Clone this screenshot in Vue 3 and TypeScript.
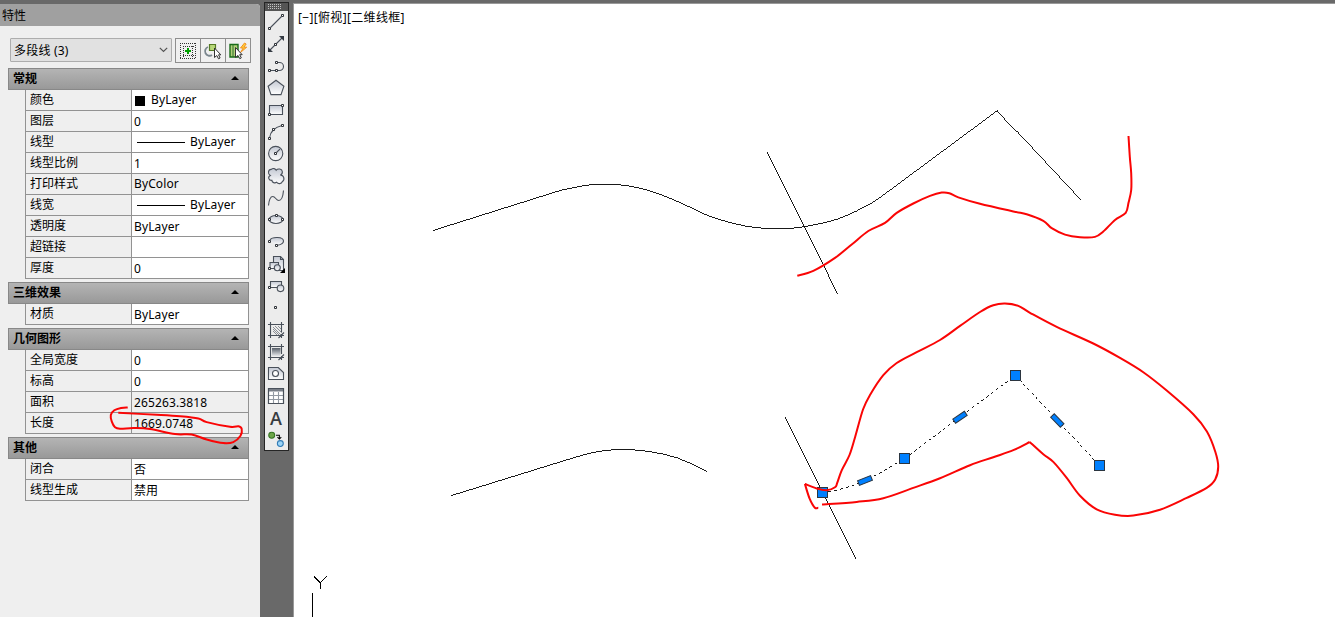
<script setup lang="ts">
interface Row { label: string; value: string; kind?: 'swatch' | 'line'; readonly?: boolean; shift?: 'up' }
interface Section { title: string; rows: Row[] }
type Pt = [number, number]

const sections: Section[] = [
  { title: '常规', rows: [
    { label: '颜色', value: 'ByLayer', kind: 'swatch' },
    { label: '图层', value: '0' },
    { label: '线型', value: 'ByLayer', kind: 'line' },
    { label: '线型比例', value: '1' },
    { label: '打印样式', value: 'ByColor', readonly: true, shift: 'up' },
    { label: '线宽', value: 'ByLayer', kind: 'line' },
    { label: '透明度', value: 'ByLayer' },
    { label: '超链接', value: '' },
    { label: '厚度', value: '0' },
  ] },
  { title: '三维效果', rows: [{ label: '材质', value: 'ByLayer' }] },
  { title: '几何图形', rows: [
    { label: '全局宽度', value: '0' },
    { label: '标高', value: '0' },
    { label: '面积', value: '265263.3818', readonly: true },
    { label: '长度', value: '1669.0748', readonly: true },
  ] },
  { title: '其他', rows: [
    { label: '闭合', value: '否' },
    { label: '线型生成', value: '禁用' },
  ] },
]

/* Smooth curve through a list of points (Catmull-Rom converted to cubic Béziers). */
function smooth(p: Pt[]): string {
  let d = `M${p[0][0]} ${p[0][1]}`
  for (let i = 0; i < p.length - 1; i++) {
    const a = p[i - 1] ?? p[i]
    const b = p[i]
    const c = p[i + 1]
    const e = p[i + 2] ?? c
    const n = (v: number) => v.toFixed(2)
    d += `C${n(b[0] + (c[0] - a[0]) / 6)} ${n(b[1] + (c[1] - a[1]) / 6)} ${n(c[0] - (e[0] - b[0]) / 6)} ${n(c[1] - (e[1] - b[1]) / 6)} ${c[0]} ${c[1]}`
  }
  return d
}

const upperCurve = smooth([[561.7, 190], [586.7, 185.3], [603, 184.3], [620, 184.9], [636.7, 187.5], [653, 191.9], [673, 199.5], [696.7, 210.3], [713, 217.5], [740, 224.9], [760, 227.9], [780, 228.6], [803, 226.9], [838, 218.9], [868, 204.9], [879, 198.3]])
const lowerCurve = smooth([[577, 456.7], [590, 453.3], [605, 450.6], [622, 449.5], [642, 450.6], [664, 454.3], [685, 461], [707, 471.3]])
const selectedCurve = smooth([[822.5, 492.5], [840, 489.3], [858, 483.5], [880, 473], [904.5, 458.5]])

const strokes: string[] = [
  smooth([[797.3, 275.7], [813.3, 270.9], [835, 257.9], [851.7, 244.5], [868.3, 231], [885, 222.9], [896.7, 212.9], [913.3, 203.5], [930, 195.9], [941.7, 192.6], [949.3, 193.2], [958.3, 197.4], [980, 203.8], [1013.3, 211.4], [1026.7, 214.2], [1043.3, 220.8], [1051.7, 228.2], [1065, 234.6], [1080, 237.2], [1095, 236.9], [1103.3, 231.5], [1115, 219.9], [1125.7, 212.8], [1128.5, 202.7], [1131.2, 190], [1131.2, 173.3], [1129.8, 156.7], [1128.5, 136]]),
  smooth([[818.3, 507.7], [814.9, 507.7], [809.5, 498.3], [804.9, 483.9]]),
  smooth([[804.9, 484], [816.7, 488.5], [826.7, 490.2], [835, 487.3], [837.3, 482.7], [841.7, 470.3], [849.5, 455], [855.2, 436.7], [863, 409.5], [870, 395], [883.3, 375.2], [896.7, 363], [916.7, 352.2], [940, 340], [960, 325.9], [980, 312], [993.3, 305.3], [1005, 303.6], [1018.3, 305.9], [1030, 312.8], [1056.7, 326.9], [1093.3, 343.5], [1120, 357.9], [1143.3, 372.2], [1166.7, 390.5], [1193.3, 414.2], [1206.9, 431.5], [1215.3, 451.7], [1218.2, 466.7], [1215.2, 479.5], [1206.7, 487.9], [1186.7, 497.9], [1160, 509.7], [1133.3, 515.6], [1115, 514.7], [1096.7, 509.3], [1080, 495.7], [1066.7, 477.9], [1053.3, 461.9], [1043.3, 454.2], [1029.7, 441.9]]),
  smooth([[1029.7, 442], [1013.3, 450.2], [993.3, 457.2], [970, 465.2], [940, 478.3], [913.3, 487.9], [883.3, 498.2], [856.7, 501.9], [822, 504.6]]),
  smooth([[127.7, 407.5], [121, 407.9], [114.3, 410.3], [110.8, 415], [111.8, 421.7], [115, 427.2], [120, 428.7], [134, 428.1], [150, 429], [175, 434.1], [191.7, 434.6], [206.7, 439.5], [223.3, 443.1], [233.3, 442.1], [240.5, 435.8], [241.7, 428.9], [238.5, 426.3], [230, 426.8], [206.7, 422.1], [198.3, 418.5], [180, 416.3], [156.7, 414.8], [118.3, 412.8]]),
]

const grips: Pt[] = [[822.5, 492.5], [904.5, 458.5], [1015.5, 375.5], [1099.5, 465.5]]
const midGrips = [
  { x: 865, y: 480.5, a: -22 },
  { x: 960, y: 417.3, a: -34 },
  { x: 1057.3, y: 420.5, a: 46 },
]
</script>

<template>
  <div class="app">
    <aside class="palette">
      <header class="palette-title">特性</header>
      <div class="picker">
        <div class="select">
          <span>多段线 (3)</span>
          <svg width="9" height="6" viewBox="0 0 9 6"><path d="M.8 .8 4.5 4.5 8.2 .8" fill="none" stroke="#555" stroke-width="1.2" /></svg>
        </div>
        <div class="tools">
          <span class="tool">
            <svg width="24" height="24" viewBox="0 0 24 24" shape-rendering="crispEdges">
              <path d="M4 4.5h16M4 19.5h16M4.5 4v16M19.5 4v16M7 7.5h11M7 16.5h11M7.5 7v11M16.5 7v11" fill="none" stroke="#333" stroke-dasharray="1 1" />
              <path d="M12 9v6M9 12h6" stroke="#00a000" stroke-width="2" />
            </svg>
          </span>
          <span class="tool">
            <svg width="24" height="24" viewBox="0 0 24 24">
              <path d="M11 16A4.5 4.5 0 1 1 7 8" fill="none" stroke="#7b878e" stroke-width="1.8" />
              <path d="M8.5 5.5h6v6h-6z" fill="#b8d878" stroke="#557a25" stroke-width="1.2" />
              <path d="M13.5 9v9.5l2.3-2 1.7 3.3 1.6-.8-1.6-3.2h2.3z" fill="#fff" stroke="#333" />
            </svg>
          </span>
          <span class="tool">
            <svg width="24" height="24" viewBox="0 0 24 24">
              <path d="M4 5.5h8V18H4z" fill="#b3cf7a" stroke="#176b17" stroke-width="1.4" />
              <path d="M7 5.5V18" stroke="#287528" />
              <path d="m18.5 4-4 5h2.7l-2.7 4.5 6.2-5.3h-2.8L20.200 5z" fill="#ffcf3b" stroke="#f08a18" stroke-width=".9" />
              <path d="M9.5 8.500v10l2.500-2 1.800 3.200 1.500-.8-1.600-3.200h2.500z" fill="#fff" stroke="#333" />
            </svg>
          </span>
        </div>
      </div>

      <div class="sections">
        <section v-for="s in sections" :key="s.title" class="section">
          <h2 class="section-head">
            <span>{{ s.title }}</span>
            <svg width="8" height="4" viewBox="0 0 8 4"><path d="M0 4 4 0l4 4z" fill="#000" /></svg>
          </h2>
          <dl class="rows">
            <div v-for="r in s.rows" :key="r.label" class="row">
              <dt>{{ r.label }}</dt>
              <dd :class="[r.kind, r.shift, { readonly: r.readonly }]">
                <i v-if="r.kind" class="mark"></i>
                <span>{{ r.value }}</span>
              </dd>
            </div>
          </dl>
        </section>
      </div>
    </aside>

    <div class="dock">
      <nav class="toolbar">
        <div class="grip">
          <svg width="15" height="5" viewBox="0 0 15 5" shape-rendering="crispEdges"><path d="M0 .5h14M0 2.5h14M0 4.5h14" stroke="#c4c4c4" stroke-dasharray="1 1" /></svg>
        </div>
        <svg class="ico" viewBox="0 0 23 22"><path d="m5.5 16.5 11-11" /><path class="n" d="M3.5 16.5h2v2h-2zM16.5 3.5h2v2h-2z" /></svg>
        <svg class="ico" viewBox="0 0 23 22"><path d="M5 17 17 5" /><path class="solid" d="M3 14v5h5zM14 3h5v5z" /><path class="n" d="M9.5 10.5h2v2h-2z" /></svg>
        <svg class="ico" viewBox="0 0 23 22"><path d="M12.5 7.5h2a4 4 0 0 1 0 8h-9" /><path class="n" d="M10.5 6.5h2v2h-2zM3.5 14.5h2v2h-2zM10.5 14.5h2v2h-2z" /></svg>
        <svg class="ico" viewBox="0 0 23 22"><defs><linearGradient id="metal" x2="0" y2="1"><stop offset="0" stop-color="#c3c8d3" /><stop offset="1" stop-color="#fff" /></linearGradient></defs><path class="m" d="m11 3.300 7.900 5.900-2.900 8.400H6L3.100 9.200z" /></svg>
        <svg class="ico" viewBox="0 0 23 22"><path class="m" d="M4.5 6.5h13v9h-13z" /><path class="n" d="M3.5 14.5h2v2h-2zM16.5 5.5h2v2h-2z" /></svg>
        <svg class="ico" viewBox="0 0 23 22"><path d="M4.5 17Q5.5 7.5 17 4.5" /><path class="n" d="M3.5 16.5h2v2h-2zM7.5 7.5h2v2h-2zM16.5 3.5h2v2h-2z" /></svg>
        <svg class="ico" viewBox="0 0 23 22"><circle class="m" cx="10.7" cy="10.5" r="7.1" /><path d="m11.5 9.5 3.4-3.4" /><path class="n" d="M9.5 9.5h2v2h-2z" /></svg>
        <svg class="ico" viewBox="0 0 23 22"><path class="m" d="M5.3 10.500C2.500 9 3 4.300 6.300 4.400c1.600-1.500 4.200-.8 4.900.8 1.700-2.200 5.900-1.300 6.100 1.300.3 1.700-.7 3-1.900 3.600 3.600-.1 4.700 4.700 2 6.400-1 2.600-4.300 2.800-5.700.8-1.900 1.300-4.700.2-4.800-1.900-3.300.2-4.400-3.500-1.600-4.900z" /></svg>
        <svg class="ico" viewBox="0 0 23 22"><path d="M3.5 18.5C4 13 5 9.5 7.8 9.5c2.7 0 3.2 4 6 4 2.6 0 4.2-4 4.7-10" /></svg>
        <svg class="ico" viewBox="0 0 23 22"><ellipse class="m" cx="11" cy="10.5" rx="7" ry="4" /><path class="n" d="M3.5 9.5h2v2h-2zM16.5 9.5h2v2h-2zM10.5 5.5h2v2h-2z" /></svg>
        <svg class="ico" viewBox="0 0 23 22"><path class="m nb" d="M5 9.5C6 5.5 18.5 5.5 18.5 10c0 2.8-3 4-7 4.3z" /><path d="M5 9C7 5.5 18.5 5.5 18.5 10c0 2.5-2.5 3.7-6 4.3" /><path class="n" d="M3.5 9.5h2v2h-2zM10.5 13.5h2v2h-2z" /></svg>
        <svg class="ico" viewBox="0 0 23 22"><path class="m" d="M8.5 9V3.5h7l3 3v11h-5" /><path d="M15.5 3.5v3h3" /><path class="m" d="M5 9.5h8.5v6H5z" /><circle class="m" cx="12.3" cy="14.8" r="3" /><path class="n" d="M3.5 14.5h2v2h-2z" /><path d="M20 15v5h-5z" fill="#000" stroke="none" /></svg>
        <svg class="ico" viewBox="0 0 23 22"><path class="m" d="M5.5 6.5h11v6h-11z" /><circle class="m" cx="15.5" cy="13.3" r="3.3" /><path class="n" d="M3.5 11.5h2v2h-2z" /></svg>
        <svg class="ico" viewBox="0 0 23 22"><path class="n" d="M9.5 9.5h2v2h-2z" /></svg>
        <svg class="ico" viewBox="0 0 23 22"><path d="m8 12 4 4M8 8l8 8M10 7l7 7M13 7l4 4M8 10l6 6" stroke-width=".6" /><path d="M3 5.5h16M3 16.5h12.5M5.5 3v16M16.5 3v10M13.5 19l5.5-5.5M16.5 15v4M16 16.5h3" /></svg>
        <svg class="ico" viewBox="0 0 23 22"><defs><linearGradient id="dark" x2="0" y2="1"><stop offset="0" stop-color="#59606a" /><stop offset="1" stop-color="#e5e7ea" /></linearGradient></defs><path d="M7 7h8.5v8H7z" fill="url(#dark)" stroke="none" /><path d="M3 5.5h16M3 16.5h12.5M5.5 3v16M16.5 3v10M13.5 19l5.5-5.5M16.5 15v4M16 16.5h3" /></svg>
        <svg class="ico" viewBox="0 0 23 22"><path class="m" d="M3.5 4.5h9.8l5.2 5v7h-15z" /><circle cx="10.5" cy="10.5" r="3" fill="#fff" /></svg>
        <svg class="ico" viewBox="0 0 23 22"><path d="M3.5 3.5h15v15h-15z" fill="#fff" /><path d="M3 5h16" stroke-width="3" stroke="#777d86" /><path d="M8.5 7v11M13.5 7v11M4 10.5h14M4 14.5h14" stroke="#9299a2" /><path d="M3.5 3.5h15v15h-15z" /></svg>
        <span class="ico letter">A</span>
        <svg class="ico" viewBox="0 0 23 22"><circle cx="6.5" cy="6.5" r="3.1" fill="#6da548" stroke="#347322" /><circle cx="15.5" cy="15.3" r="3.1" fill="#9bd4f7" stroke="#317bb5" /><path d="M11 6.5h3.5V10M12.5 8.5l2 2 2-2" stroke="#000" /></svg>
      </nav>
    </div>

    <main class="viewport">
      <svg class="model" width="1040" height="613" viewBox="295 4 1040 613">
        <g class="cad" shape-rendering="crispEdges">
          <path d="M433 230.5 561.7 190" />
          <path :d="upperCurve" />
          <path d="M879 198.3 997.5 110.5 1080.5 199.5" />
          <path d="m767.2 152 70.5 142" />
          <path d="M451 495.7 577 456.7" />
          <path :d="lowerCurve" />
          <path d="m785.2 417 71 142" />
          <path class="dash" :d="selectedCurve" />
          <path class="dash" d="M904.5 458.5 1015.5 375.5 1099.5 465.5" />
          <path d="m314 576.5 6.300 6.300 6.300-6.300M320.500 583v6M312.500 593v24" stroke-width="1" />
        </g>
        <g fill="#0080ff" stroke="#2b3540">
          <rect v-for="(g, i) in grips" :key="i" :x="g[0] - 5" :y="g[1] - 5" width="10" height="10" />
          <rect v-for="m in midGrips" :key="m.x" :x="m.x - 7" :y="m.y - 2.5" width="14" height="5" :transform="`rotate(${m.a} ${m.x} ${m.y})`" />
        </g>
      </svg>
      <div class="view-label">[−][俯视][二维线框]</div>
    </main>

    <svg class="markup" width="1335" height="617" viewBox="0 0 1335 617">
      <path v-for="(d, i) in strokes" :key="i" :d="d" />
    </svg>
  </div>
</template>

<style>
html, body { margin: 0; overflow: hidden; background: #696969; }
</style>

<style scoped>
.app {
  position: relative;
  display: flex;
  width: 1335px;
  height: 617px;
  background: #696969;
  color: #000;
  font: 12px/20px "Noto Sans", "Noto Sans CJK SC", sans-serif;
  overflow: hidden;
}
.palette { width: 260px; height: 613px; margin-top: 4px; background: #efefef; border-radius: 0 4px 0 0; flex: none; overflow: hidden; }
.palette-title { height: 22px; padding-left: 2px; line-height: 24px; background: #a0a0a0; }
.picker { display: flex; gap: 3px; padding: 11px 0 0 10px; align-items: center; height: 26px; }
.select {
  display: flex; align-items: center; justify-content: space-between;
  box-sizing: border-box; width: 162px; height: 24px; padding: 0 3px 0 3px;
  background: #e1e1e1; border: 1px solid #adadad; border-radius: 1px;
}
.select span { letter-spacing: .2px; padding-top: 2px; }
.tools { display: flex; box-sizing: border-box; width: 76px; height: 25px; border: 1px solid #8f8f8f; background: #f0f0f0; }
.tool { width: 24px; height: 23px; flex: none; overflow: hidden; }
.tool + .tool { border-left: 1px solid #8f8f8f; }
.tool svg { display: block; }
.sections { display: flex; flex-direction: column; gap: 3px; width: 241px; margin: 5px 0 0 8px; }
.section-head {
  display: flex; align-items: center; justify-content: space-between;
  box-sizing: border-box; height: 22px; margin: 0; padding: 0 9px 0 4px;
  border: 1px solid #888; font-size: 12px; font-weight: 700;
  background: linear-gradient(#b4b4b4, #999);
}
.section-head svg { margin-bottom: 2px; }
.rows { margin: 0 0 0 17px; }
.row { display: flex; box-sizing: border-box; height: 21px; border: 1px solid #929292; border-top: 0; }
.row dt { width: 106px; box-sizing: border-box; padding-left: 4px; border-right: 1px solid #929292; line-height: 20px; flex: none; }
.row dd { display: flex; align-items: center; flex: 1; margin: 0; padding: 1px 0 0 2px; background: #fff; line-height: 19px; letter-spacing: .12px; box-sizing: border-box; height: 20px; }
.row dd.readonly { background: #efefef; }
.row dd.up span, .row dd.swatch span, .row dd.line span { position: relative; top: -1px; }
.row dd.swatch, .row dd.line { padding-left: 3px; }
.swatch .mark { width: 10px; height: 10px; margin-right: 6px; background: #000; }
.line .mark { width: 48px; height: 1px; margin: 0 5px 0 2px; background: #000; }
.dock { width: 33px; padding: 2px 0 0 4px; box-sizing: border-box; flex: none; }
.toolbar { box-sizing: border-box; width: 25px; height: 449px; border: 1px solid #252525; background: #ececec; }
.grip { height: 8px; background: #555; padding: 1px 0 0 3px; box-sizing: border-box; }
.grip svg { display: block; }
.ico { display: block; width: 23px; height: 22px; fill: none; stroke: #49505a; stroke-width: 1.1; }
.ico:last-child { height: 21px; }
.ico .n { fill: #fff; stroke: #30343a; stroke-width: 1; }
.ico .m { fill: url(#metal); }
.ico .nb { stroke: none; }
.ico .solid { fill: #343a43; stroke: none; }
.letter { box-sizing: border-box; padding-right: 1px; text-align: center; font: 600 18px/22px "Open Sans", sans-serif; color: #373b40; }
.viewport { position: relative; flex: 1; margin-top: 3px; border: solid #999; border-width: 1px 0 0 1px; padding-left: 1px; background: #fff; overflow: hidden; }
.model { display: block; }
.cad { fill: none; stroke: #000; stroke-width: .9; }
.dash { stroke-dasharray: 3 3; }
.view-label { position: absolute; left: 4px; top: 4px; white-space: nowrap; letter-spacing: .33px; }
.markup { position: absolute; inset: 0; pointer-events: none; fill: none; stroke: #fa0505; stroke-width: 2; stroke-linejoin: round; }
</style>
